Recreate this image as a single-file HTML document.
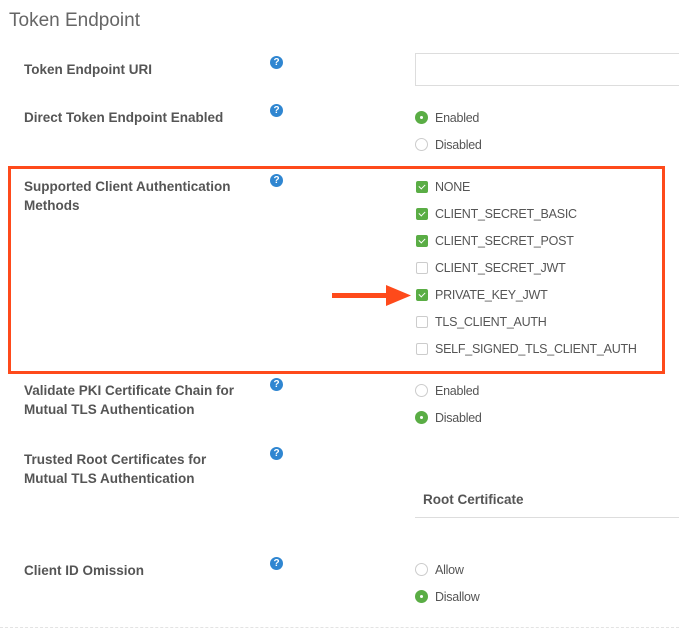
<!DOCTYPE html>
<html><head><meta charset="utf-8"><style>
body{margin:0;width:679px;height:642px;background:#fff;position:relative;overflow:hidden;font-family:"Liberation Sans",sans-serif;color:#555}
.a{position:absolute;white-space:nowrap}
.t{font-size:19px;color:#666;left:9px;top:10px}
.l{font-size:13.5px;font-weight:bold;color:#555;left:24px;line-height:19px}
.h{position:absolute;width:13px;height:13px;border-radius:50%;background:#2f86d1;color:#fff;font-size:10px;font-weight:bold;text-align:center;line-height:13px}
.o{position:absolute;left:415px;font-size:12.5px;letter-spacing:-0.25px;color:#555;line-height:14px}
.o span{position:absolute;left:20px;top:0}
.r{position:absolute;left:0;top:0;width:11px;height:11px;border:1.5px solid #ccc;border-radius:50%;background:#fff}
.r.on{background:#5aad45;border-color:#5aad45}
.r.on:after{content:"";position:absolute;left:4px;top:4px;width:3px;height:3px;border-radius:50%;background:#fff}
.c{position:absolute;left:1px;top:1px;width:10px;height:10px;border:1.5px solid #ccc;border-radius:2px;background:#fff}
.c.on{background:#5aad45;border-color:#5aad45}
.c.on:after{content:"";position:absolute;left:3px;top:1px;width:3px;height:5px;border:solid #fff;border-width:0 1.5px 1.5px 0;transform:rotate(45deg)}
</style></head><body>
<div class="a t">Token Endpoint</div>

<div class="a l" style="top:60px">Token Endpoint URI</div>
<div class="h" style="left:270px;top:56px">?</div>
<div class="a" style="left:415px;top:53px;width:270px;height:33px;border:1px solid #ddd;box-sizing:border-box"></div>

<div class="a l" style="top:108px">Direct Token Endpoint Enabled</div>
<div class="h" style="left:270px;top:104px">?</div>
<div class="o" style="top:111px"><i class="r on"></i><span>Enabled</span></div>
<div class="o" style="top:138px"><i class="r"></i><span>Disabled</span></div>

<div class="a" style="left:8px;top:166px;width:651px;height:202px;border:3px solid #fe4a1b"></div>
<div class="a l" style="top:177px">Supported Client Authentication<br>Methods</div>
<div class="h" style="left:270px;top:174px">?</div>
<div class="o" style="top:180px"><i class="c on"></i><span>NONE</span></div>
<div class="o" style="top:207px"><i class="c on"></i><span>CLIENT_SECRET_BASIC</span></div>
<div class="o" style="top:234px"><i class="c on"></i><span>CLIENT_SECRET_POST</span></div>
<div class="o" style="top:261px"><i class="c"></i><span>CLIENT_SECRET_JWT</span></div>
<div class="o" style="top:288px"><i class="c on"></i><span>PRIVATE_KEY_JWT</span></div>
<div class="o" style="top:315px"><i class="c"></i><span>TLS_CLIENT_AUTH</span></div>
<div class="o" style="top:342px"><i class="c"></i><span>SELF_SIGNED_TLS_CLIENT_AUTH</span></div>
<svg class="a" style="left:330px;top:284px" width="82" height="22"><rect x="2" y="9" width="56" height="5" fill="#fe4a1b"/><polygon points="56,1 81,11.5 56,22" fill="#fe4a1b"/></svg>

<div class="a l" style="top:381px">Validate PKI Certificate Chain for<br>Mutual TLS Authentication</div>
<div class="h" style="left:270px;top:378px">?</div>
<div class="o" style="top:384px"><i class="r"></i><span>Enabled</span></div>
<div class="o" style="top:411px"><i class="r on"></i><span>Disabled</span></div>

<div class="a l" style="top:450px">Trusted Root Certificates for<br>Mutual TLS Authentication</div>
<div class="h" style="left:270px;top:447px">?</div>
<div class="a" style="left:423px;top:492px;font-size:13.5px;font-weight:bold;color:#555">Root Certificate</div>
<div class="a" style="left:415px;top:517px;width:264px;height:1px;background:#ddd"></div>

<div class="a l" style="top:561px">Client ID Omission</div>
<div class="h" style="left:270px;top:557px">?</div>
<div class="o" style="top:563px"><i class="r"></i><span>Allow</span></div>
<div class="o" style="top:590px"><i class="r on"></i><span>Disallow</span></div>

<div class="a" style="left:0;top:627px;width:679px;border-top:1px dashed #e3e3e3"></div>
</body></html>
